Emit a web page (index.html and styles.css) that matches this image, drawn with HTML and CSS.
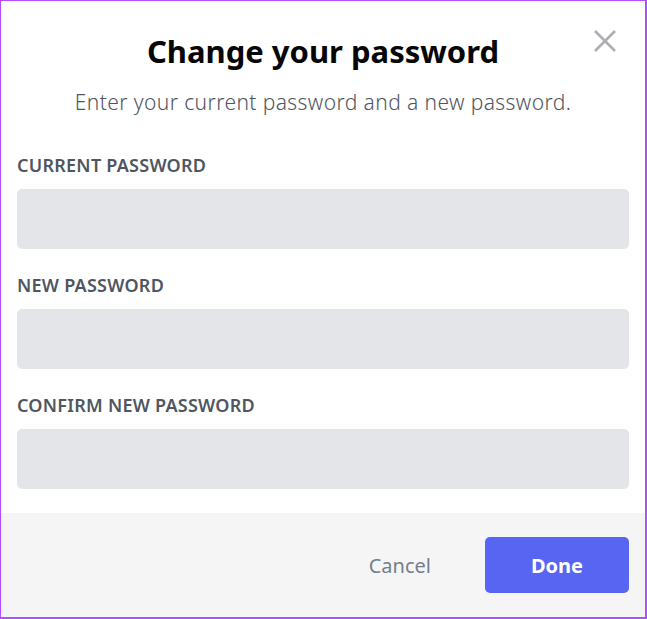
FILE: index.html
```html
<!DOCTYPE html>
<html>
  <head>
    <title>Change your password</title>
    <link rel="stylesheet" href="styles.css">
  </head>
  <body>
    <div class="modal">
      <div class="modal-body">
        <button class="close-btn" type="button" aria-label="Close">
          <svg width="24" height="24" viewBox="0 0 24 24">
            <path d="M2 2L22 22M22 2L2 22" stroke="#adafb3" stroke-width="2.6" fill="none"/>
          </svg>
        </button>
        <h1 class="title">Change your password</h1>
        <p class="subtitle">Enter your current password and a new password.</p>
        <form id="passwordForm">
          <div class="field">
            <label for="CurrentPassword">CURRENT PASSWORD</label>
            <input type="password" id="CurrentPassword" name="CurrentPassword">
          </div>
          <div class="field">
            <label for="NewPassword">NEW PASSWORD</label>
            <input type="password" id="NewPassword" name="NewPassword">
          </div>
          <div class="field">
            <label for="ConfirmPassword">CONFIRM NEW PASSWORD</label>
            <input type="password" id="ConfirmPassword" name="ConfirmPassword">
          </div>
        </form>
      </div>
      <div class="modal-footer">
        <button type="button" class="cancel-btn">Cancel</button>
        <button type="button" class="done-btn">Done</button>
      </div>
    </div>
  </body>
</html>
```

FILE: styles.css
```css
body {
  margin: 0;
  font-family: "Noto Sans", "Open Sans", sans-serif;
}

.modal {
  box-sizing: border-box;
  width: 647px;
  height: 619px;
  border: 1px solid #b34dff;
  border-right-width: 2px;
  border-bottom-width: 2px;
  background-color: #fff;
  display: flex;
  flex-direction: column;
}

.modal-body {
  position: relative;
  padding: 0 16px 0 16px;
  height: 512px;
}

.close-btn {
  position: absolute;
  top: 28px;
  right: 28px;
  padding: 0;
  border: none;
  background: none;
  cursor: pointer;
}

.title {
  margin: 0;
  padding-top: 29px;
  text-align: center;
  font-size: 31px;
  font-weight: 700;
  line-height: 42px;
  color: #060607;
}

.subtitle {
  margin: 17px 0 0 0;
  text-align: center;
  font-size: 21px;
  font-weight: 300;
  letter-spacing: 0.4px;
  line-height: 26px;
  color: #4f5660;
}

.field {
  margin-top: 24px;
}

.field:first-child {
  margin-top: 38px;
}

.field label {
  display: block;
  font-size: 18px;
  font-weight: 600;
  letter-spacing: 0.25px;
  line-height: 24px;
  color: #4f5660;
  margin-bottom: 12px;
}

.field input {
  display: block;
  box-sizing: border-box;
  width: 612px;
  height: 60px;
  border: none;
  border-radius: 5px;
  background-color: #e3e5e8;
}

.modal-footer {
  flex: 1;
  background-color: #f5f5f5;
  display: flex;
  justify-content: flex-end;
  align-items: center;
  padding: 0 16px;
  gap: 54px;
}

.cancel-btn {
  border: none;
  background: none;
  font-family: inherit;
  font-size: 20px;
  color: #747f8d;
  cursor: pointer;
  padding: 0;
}

.done-btn {
  width: 144px;
  height: 56px;
  border: none;
  border-radius: 5px;
  background-color: #5865f2;
  color: #fff;
  font-family: inherit;
  font-size: 20px;
  font-weight: 700;
  cursor: pointer;
}
```
